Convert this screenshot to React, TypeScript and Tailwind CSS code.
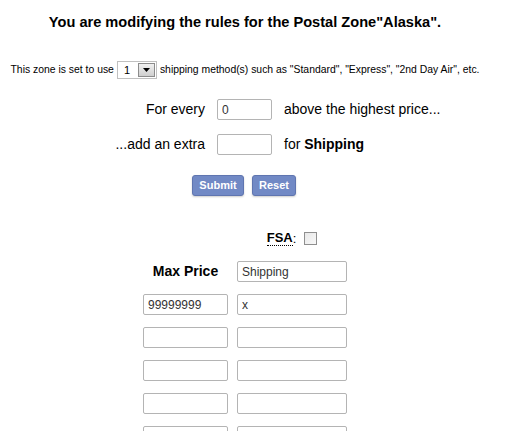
import React from "react";

const inputCls =
  "h-[21px] border border-[#b4b4b4] rounded-[2px] bg-white px-[4px] text-[12px] text-[#333] outline-none";

const App: React.FC = () => {
  const rows = [
    { price: "99999999", ship: "x" },
    { price: "", ship: "" },
    { price: "", ship: "" },
    { price: "", ship: "" },
    { price: "", ship: "" },
  ];

  return (
    <div className="w-[490px] bg-white text-black font-['Liberation_Sans',Arial,sans-serif]">
      {/* Heading */}
      <h1 className="pt-[14px] text-center text-[14.6px] leading-[16px] font-bold">
        You are modifying the rules for the Postal Zone"Alaska".
      </h1>

      {/* Method count */}
      <div className="mt-[31px] flex items-center justify-center whitespace-nowrap text-[10.4px] leading-[18px]">
        <span>This zone is set to use</span>
        <div className="mx-[3px] flex h-[18px] w-[40px] items-stretch border border-[#c0c0c0] bg-white">
          <span className="flex-1 pl-[6px] text-[11px] leading-[16px]">1</span>
          <span className="m-[1px] flex w-[17px] items-center justify-center border border-[#8c8c8c] bg-gradient-to-b from-[#f0f0f0] to-[#cfcfcf]">
            <svg width="7" height="4" viewBox="0 0 7 4">
              <path d="M0 0h7L3.5 4z" fill="#000" />
            </svg>
          </span>
        </div>
        <span>shipping method(s) such as "Standard", "Express", "2nd Day Air", etc.</span>
      </div>

      {/* Extra rule */}
      <div className="mt-[20px] grid grid-cols-[205px_55px_auto] items-center gap-x-3 gap-y-[14px] text-[14px]">
        <span className="text-right">For every</span>
        <input className={inputCls + " w-[55px]"} defaultValue="0" />
        <span>above the highest price...</span>
        <span className="text-right">...add an extra</span>
        <input className={inputCls + " w-[55px]"} defaultValue="" />
        <span>
          for <b>Shipping</b>
        </span>
      </div>

      {/* Buttons */}
      <div className="mt-[20px] flex justify-center gap-[8px] pr-[2px]">
        <button className="h-[21px] w-[52px] rounded-[3px] border border-[#5f75b0] bg-[#7189c5] text-[11px] font-bold text-white shadow-[0_1px_2px_rgba(0,0,0,0.2)]">
          Submit
        </button>
        <button className="h-[21px] w-[44px] rounded-[3px] border border-[#5f75b0] bg-[#7189c5] text-[11px] font-bold text-white shadow-[0_1px_2px_rgba(0,0,0,0.2)]">
          Reset
        </button>
      </div>

      {/* Price table */}
      <div className="mt-[32px] flex justify-center">
        <div className="grid grid-cols-[85px_110px] gap-x-[9px] gap-y-3">
          <div />
          <div className="flex h-[21px] items-center justify-center gap-[8px]">
            <abbr className="border-b border-dotted border-black text-[13px] font-bold leading-[14px] no-underline">
              FSA
            </abbr>
            <span className="-ml-[8px] text-[13px]">:</span>
            <span className="h-[13px] w-[13px] border border-[#8f8f8f] bg-gradient-to-br from-[#e8e8e8] to-[#f8f8f8]" />
          </div>
          <div className="flex h-[21px] items-center justify-center text-[14px] font-bold">Max Price</div>
          <input className={inputCls + " w-[110px]"} defaultValue="Shipping" />
          {rows.map((r, i) => (
            <React.Fragment key={i}>
              <input className={inputCls + " w-[85px]"} defaultValue={r.price} />
              <input className={inputCls + " w-[110px]"} defaultValue={r.ship} />
            </React.Fragment>
          ))}
        </div>
      </div>
    </div>
  );
};

export default App;
